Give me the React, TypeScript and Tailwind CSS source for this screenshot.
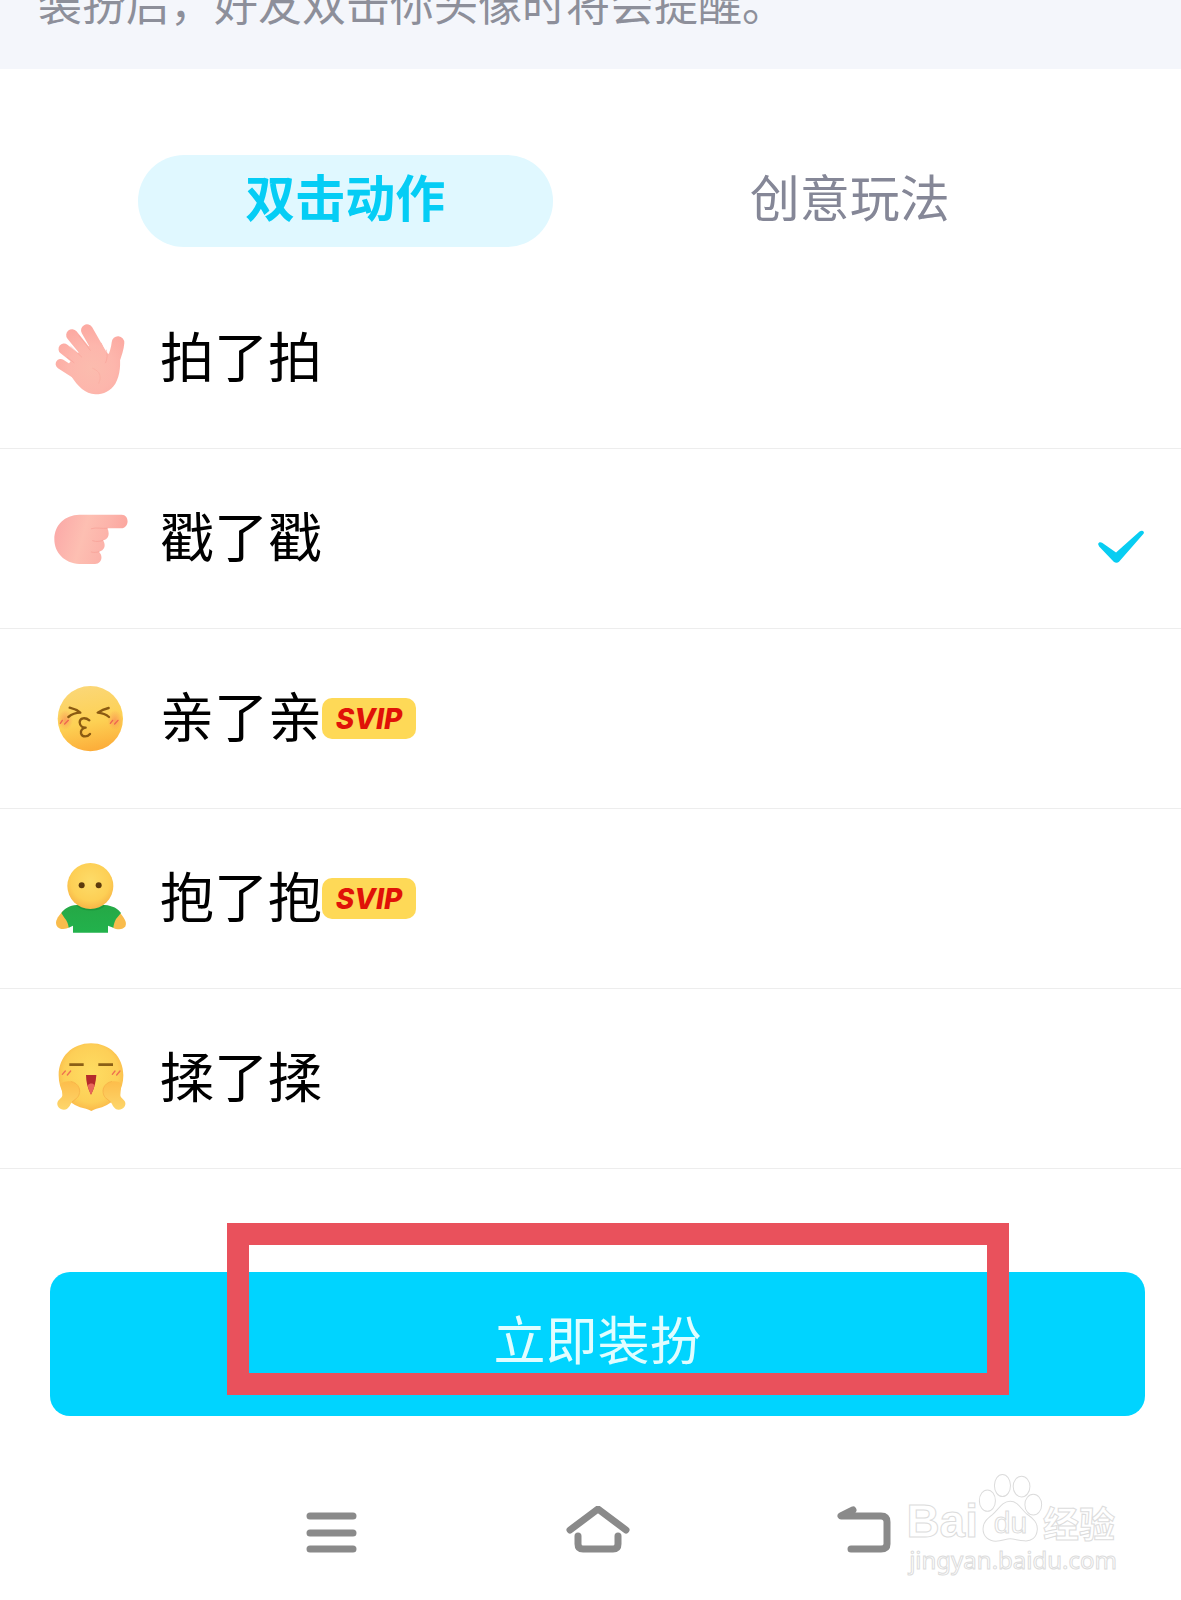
import React, { useState } from 'react';

const cjk = "font-['Noto_Sans_CJK_SC',sans-serif]";

function PatIcon() {
  return (
    <svg viewBox="72 63 225 225" className="h-[75px] w-[75px] shrink-0" aria-hidden="true">
      <defs>
        <radialGradient id="pat-palm" gradientUnits="userSpaceOnUse" cx="185" cy="205" r="125">
          <stop offset="0" stopColor="#fbbcae" />
          <stop offset="0.55" stopColor="#fdb6ac" />
          <stop offset="1" stopColor="#fcaaa2" />
        </radialGradient>
      </defs>
      <g strokeLinecap="round" stroke="url(#pat-palm)" fill="none">
        <path d="M264 128 C262 155 252 175 240 205" strokeWidth="38" />
        <path d="M92 192 L160 236" strokeWidth="30" />
        <path d="M102 147 L175 205" strokeWidth="33" />
        <path d="M126 105 L195 190" strokeWidth="35" />
        <path d="M171 91 L222 180" strokeWidth="36" />
      </g>
      <path
        d="M110 200 L135 165 L170 140 L214 128 C222 145 228 158 234 161 L268 160 C273 190 271 226 256 251 C242 273 221 283 196 283 C165 281 145 262 122 226 Z"
        fill="url(#pat-palm)"
      />
      <g strokeLinecap="round" fill="none" stroke="#f79b93" strokeWidth="3">
        <path d="M112 172 L132 188" opacity="0.5" />
        <path d="M122 139 L155 171" opacity="0.5" />
        <path d="M147 107 L181 151" opacity="0.5" />
        <path d="M229 150 C233 165 232 175 227 188" opacity="0.5" />
        <path d="M188 205 C210 213 216 230 206 250" opacity="0.3" />
      </g>
    </svg>
  );
}

function PokeIcon() {
  return (
    <svg viewBox="72 63 225 225" className="h-[75px] w-[75px] shrink-0" aria-hidden="true">
      <defs>
        <linearGradient id="poke-hand" x1="0" y1="0.3" x2="1" y2="0.5">
          <stop offset="0" stopColor="#fbaaa8" />
          <stop offset="0.4" stopColor="#fdbfb2" />
          <stop offset="0.7" stopColor="#fcb3aa" />
          <stop offset="1" stopColor="#fba39c" />
        </linearGradient>
      </defs>
      <path
        d="M148 104 H275 C299 104 299 145 273 145 H232 C240 160 236 178 219 181 C229 196 223 212 207 215 C221 230 214 251 195 252 H148 C103 250 73 218 73 178 C73 134 105 105 148 104 Z"
        fill="url(#poke-hand)"
      />
      <g fill="none" stroke="#f7988f" strokeWidth="3" strokeLinecap="round" opacity="0.5">
        <path d="M184 146 C200 141 215 147 232 145" />
        <path d="M188 182 C200 187 210 184 219 181" />
        <path d="M184 216 C192 219 200 217 207 215" />
      </g>
    </svg>
  );
}

function KissIcon() {
  return (
    <svg viewBox="72 63 225 225" className="h-[75px] w-[75px] shrink-0" aria-hidden="true">
      <defs>
        <linearGradient id="kiss-face" x1="0.4" y1="0" x2="0.6" y2="1">
          <stop offset="0" stopColor="#fbd777" />
          <stop offset="0.55" stopColor="#fdd154" />
          <stop offset="1" stopColor="#fcab38" />
        </linearGradient>
        <radialGradient id="kiss-blush">
          <stop offset="0" stopColor="#f98f56" stopOpacity="0.7" />
          <stop offset="1" stopColor="#f98f56" stopOpacity="0" />
        </radialGradient>
      </defs>
      <circle cx="181" cy="176" r="98" fill="url(#kiss-face)" />
      <ellipse cx="106" cy="180" rx="23" ry="30" fill="url(#kiss-blush)" />
      <ellipse cx="255" cy="180" rx="23" ry="30" fill="url(#kiss-blush)" />
      <g fill="none" stroke="#8a5a12" strokeWidth="7" strokeLinecap="round" strokeLinejoin="round">
        <path d="M119 143 C132 146 142 151 151 158 C138 158 126 162 115 171" />
        <path d="M236 144 C223 147 212 152 203 158 C217 159 228 163 237 171" />
        <path d="M178 181 C166 171 149 173 149 187 C149 199 160 203 167 203 C158 204 151 211 153 220 C157 233 173 231 180 222" />
      </g>
      <g stroke="#ee6550" strokeWidth="4" strokeLinecap="round">
        <path d="M97 181 L91 190" />
        <path d="M115 181 L104 192" />
        <path d="M248 181 L241 190" />
        <path d="M264 181 L254 192" />
      </g>
    </svg>
  );
}

function HugIcon() {
  return (
    <svg viewBox="72 63 225 225" className="h-[75px] w-[75px] shrink-0" aria-hidden="true">
      <defs>
        <radialGradient id="hug-head" cx="0.5" cy="0.4" r="0.6">
          <stop offset="0" stopColor="#fddc69" />
          <stop offset="0.7" stopColor="#fdcf55" />
          <stop offset="1" stopColor="#f8b547" />
        </radialGradient>
        <linearGradient id="hug-shirt" x1="0" y1="0" x2="0" y2="1">
          <stop offset="0" stopColor="#25a846" />
          <stop offset="1" stopColor="#22b24c" />
        </linearGradient>
      </defs>
      <path d="M98 214 C82 232 74 245 80 257 C86 269 105 270 118 262 L128 240 Z" fill="#f9bc4c" />
      <path d="M268 216 C282 233 292 246 286 259 C280 270 261 270 249 263 L238 242 Z" fill="#f9bc4c" />
      <path
        d="M140 195 H224 C248 197 264 206 273 219 L258 237 C253 246 251 255 250 263 L234 257 V278 H129 V257 L116 263 C115 252 111 241 103 233 L94 219 C105 205 118 197 140 195 Z"
        fill="url(#hug-shirt)"
      />
      <path d="M143 197 C160 213 205 213 222 197" fill="none" stroke="#158d36" strokeWidth="5" opacity="0.6" />
      <circle cx="181" cy="138" r="69" fill="url(#hug-head)" />
      <circle cx="155" cy="136" r="9" fill="#5c3a0d" />
      <circle cx="206" cy="136" r="9" fill="#5c3a0d" />
    </svg>
  );
}

function RubIcon() {
  return (
    <svg viewBox="72 63 225 225" className="h-[75px] w-[75px] shrink-0" aria-hidden="true">
      <defs>
        <radialGradient id="rub-face" cx="0.5" cy="0.45" r="0.6">
          <stop offset="0" stopColor="#fedd62" />
          <stop offset="0.7" stopColor="#fdcf57" />
          <stop offset="1" stopColor="#fab044" />
        </radialGradient>
        <linearGradient id="rub-hand" x1="0" y1="0" x2="0" y2="1">
          <stop offset="0" stopColor="#fdbd4b" />
          <stop offset="1" stopColor="#fdd66b" />
        </linearGradient>
      </defs>
      <path
        d="M183 70 C240 70 280 111 280 166 C280 208 258 248 216 262 C204 266 194 267 184 273 C174 267 162 266 150 262 C108 248 86 208 86 166 C86 111 126 70 183 70 Z"
        fill="url(#rub-face)"
      />
      <path d="M94 190 C110 178 140 184 148 205 C154 226 137 236 126 246 C119 256 116 269 102 269 C89 269 78 256 83 245 C87 237 96 235 97 226 Z" fill="url(#rub-hand)" />
      <path d="M274 190 C258 178 228 184 220 205 C214 226 231 236 242 246 C249 256 252 269 266 269 C279 269 290 256 285 245 C281 237 272 235 271 226 Z" fill="url(#rub-hand)" />
      <g fill="none" stroke="#f3983a" strokeWidth="3" opacity="0.4">
        <path d="M122 184 C148 189 156 214 143 232 L126 246" />
        <path d="M246 184 C220 189 212 214 225 232 L242 246" />
      </g>
      <path d="M118 134 H161 M205 134 H249" stroke="#8a5f16" strokeWidth="8" />
      <path d="M168 165 H199 C198 187 192 207 183 224 C174 207 168 187 168 165 Z" fill="#b52a2c" />
      <path d="M173 196 C179 189 189 189 194 196 C191 207 187 216 183 224 C179 216 175 207 173 196 Z" fill="#e8665b" />
      <g stroke="#ee7050" strokeWidth="4" strokeLinecap="round">
        <path d="M106 153 L97 163" />
        <path d="M122 153 L112 165" />
        <path d="M255 153 L247 163" />
        <path d="M270 153 L260 165" />
      </g>
    </svg>
  );
}

const actions = [
  { id: 'pat', name: '拍了拍', Icon: PatIcon, svip: false },
  { id: 'poke', name: '戳了戳', Icon: PokeIcon, svip: false },
  { id: 'kiss', name: '亲了亲', Icon: KissIcon, svip: true },
  { id: 'hug', name: '抱了抱', Icon: HugIcon, svip: true },
  { id: 'rub', name: '揉了揉', Icon: RubIcon, svip: false },
];

const tabs = ['双击动作', '创意玩法'];

function Watermark() {
  return (
    <div
      className="pointer-events-none absolute right-[64px] bottom-[24px] flex flex-col items-end text-white"
      style={{ WebkitTextStroke: '1px #dcdcdc' }}
    >
      <div className="flex items-end pr-[2px] font-['Liberation_Sans',sans-serif] leading-none">
        <span className="text-[46px] font-bold">Bai</span>
        <span className="relative flex h-[72px] w-[65px] items-end justify-center pb-[6px]">
          <svg viewBox="472 36 194 212" className="absolute inset-0 h-full w-full" fill="#fff" stroke="#dcdcdc" strokeWidth="3" aria-hidden="true">
            <ellipse cx="500" cy="120" rx="24" ry="32" />
            <ellipse cx="545" cy="75" rx="24" ry="33" />
            <ellipse cx="602" cy="78" rx="25" ry="31" />
            <ellipse cx="637" cy="132" rx="25" ry="31" />
            <path d="M568 122 C592 122 600 145 618 160 C638 174 650 186 649 206 C647 232 630 242 610 240 C590 238 580 234 568 234 C556 234 545 240 525 241 C504 241 487 227 487 205 C487 184 500 174 515 162 C534 146 544 122 568 122 Z" />
          </svg>
          <span className="relative text-[30px]">du</span>
        </span>
        <span className="pb-1 font-['Noto_Sans_CJK_SC',sans-serif] text-[36px] font-bold">经验</span>
      </div>
      <div className="font-['Noto_Sans',sans-serif] text-[24px] leading-8">jingyan.baidu.com</div>
    </div>
  );
}

export default function App() {
  const [tab, setTab] = useState(tabs[0]);
  const [action, setAction] = useState('poke');

  return (
    <div className={`relative w-full overflow-hidden bg-white ${cjk}`}>
      <header className="flex bg-[#f4f6fb] pl-[38px]">
        <p className="-mt-5 pb-[45px] text-[44px] leading-[44px] whitespace-nowrap text-[#8d8f9a]">
          装扮后，好友双击你头像时将会提醒。
        </p>
      </header>

      {/* 标签切换 */}
      <div role="tablist" className="flex gap-[90px] pt-[86px] pr-[124px] pb-[22px] pl-[138px]">
        {tabs.map((name) => (
          <button
            key={name}
            role="tab"
            aria-selected={tab === name}
            onClick={() => setTab(name)}
            className={`h-[92px] flex-1 rounded-full pb-3 text-[50px] leading-none ${
              tab === name ? 'bg-[#e0f8ff] font-bold text-[#05cdf5]' : 'text-[#858797]'
            }`}
          >
            {name}
          </button>
        ))}
      </div>

      {/* 动作列表 */}
      <div role="radiogroup" aria-label="双击动作">
        {actions.map(({ id, name, Icon, svip }) => (
          <label
            key={id}
            className="relative flex h-[180px] cursor-pointer items-center border-b border-[#ededed] pr-[34px] pl-[54px]"
          >
            <input
              type="radio"
              name="action"
              value={id}
              checked={action === id}
              onChange={() => setAction(id)}
              className="peer sr-only"
            />
            <Icon />
            <span className="ml-[31px] pb-2 text-[54px] leading-none text-black">{name}</span>
            {svip && (
              <span className="flex h-[41px] w-[94px] items-center justify-center rounded-[10px] bg-[#fed957] font-['Inter',sans-serif] text-[28px] leading-none font-extrabold text-[#e01208] italic">
                SVIP
              </span>
            )}
            <svg
              viewBox="80 36 150 160"
              className="invisible ml-auto h-[53px] w-[50px] peer-checked:visible"
              aria-hidden="true"
            >
              <path d="M83 133 C84 127 90 126 95 129 L137 158 L208 95 C215 89 225 94 220 102 L146 186 C142 190 135 190 130 186 L86 140 Z" fill="#08cdf2" />
            </svg>
          </label>
        ))}
      </div>

      <div className="relative mt-[103px] mr-[36px] ml-[50px]">
        <button className="h-[144px] w-full rounded-[20px] bg-[#00d4ff] pb-3 text-[52px] leading-none text-[#e0fdff]">
          立即装扮
        </button>
        <div className="pointer-events-none absolute -top-[49px] right-[136px] bottom-[21px] left-[177px] border-[22px] border-[#e9515c]" />
      </div>

      {/* 系统导航栏 */}
      <nav className="grid h-[184px] grid-cols-3 items-center justify-items-center pt-[50px] pr-[184px] pl-[199px] text-[#8a8a8a]">
        <button aria-label="菜单">
          <svg viewBox="0 0 66 54" className="h-[54px] w-[66px]" fill="none" stroke="currentColor" strokeWidth="7" strokeLinecap="round">
            <path d="M11 10 H54 M11 27 H54 M11 43 H54" />
          </svg>
        </button>
        <button aria-label="主页">
          <svg viewBox="0 0 66 54" className="h-[54px] w-[66px]" fill="none" stroke="currentColor" strokeWidth="7" strokeLinecap="round" strokeLinejoin="round">
            <path d="M5 24 L33 3 L61 24" />
            <path d="M13 30 V38 Q13 43 18 43 H48 Q53 43 53 38 V30" />
          </svg>
        </button>
        <button aria-label="返回">
          <svg viewBox="0 0 66 54" className="h-[54px] w-[66px]" fill="none" stroke="currentColor" strokeWidth="7" strokeLinecap="round" strokeLinejoin="round">
            <path d="M22 4 L10 10 H50 Q56 10 56 16 V38 Q56 43 50 43 H20" />
          </svg>
        </button>
      </nav>
      <Watermark />
    </div>
  );
}
